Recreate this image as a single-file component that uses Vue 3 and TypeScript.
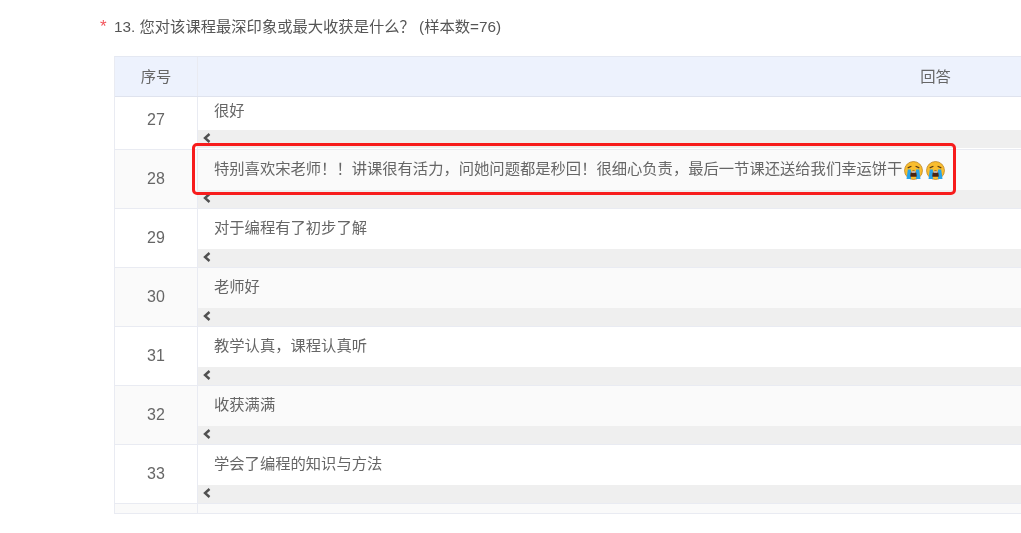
<script setup lang="ts">
interface Row { id: number; text: string; emoji?: boolean }
const rows: Row[] = [
  { id: 27, text: '很好' },
  { id: 28, text: '特别喜欢宋老师！！讲课很有活力，问她问题都是秒回！很细心负责，最后一节课还送给我们幸运饼干', emoji: true },
  { id: 29, text: '对于编程有了初步了解' },
  { id: 30, text: '老师好' },
  { id: 31, text: '教学认真，课程认真听' },
  { id: 32, text: '收获满满' },
  { id: 33, text: '学会了编程的知识与方法' },
]
</script>

<template>
  <div class="page">
    <h3 class="title"><span class="star">*</span><span>13. 您对该课程最深印象或最大收获是什么？ (样本数=76)</span></h3>
    <div class="table">
      <div class="row head">
        <div class="c1">序号</div>
        <div class="c2">回答</div>
      </div>
      <div v-for="r in rows" :key="r.id" class="row body" :class="{ first: r.id === 27 }">
        <div class="c1 num">{{ r.id }}</div>
        <div class="c2b">
          <div class="text">
            <span>{{ r.text }}</span>
            <template v-if="r.emoji">
              <svg v-for="n in 2" :key="n" class="emoji" viewBox="0 0 18 18" aria-hidden="true">
                <circle cx="9" cy="9" r="8.500" fill="#f9bd2e" stroke="#b97f1a" stroke-width="0.700" />
                <path d="M3.500 6.500 7 5M14.500 6.500 11 5" stroke="#5b3a12" stroke-width="1.200" fill="none" />
                <path d="M3.600 8h3v9H2.400z M11.400 8h3l1.200 9h-4.200z" fill="#27a4e8" />
                <path d="M6 13.500c0-3 1.300-4.500 3-4.500s3 1.500 3 4.500v1.500H6z" fill="#4a2512" />
                <path d="M7 9.800h4v1.200H7z" fill="#ffffff" />
              </svg>
            </template>
          </div>
          <div class="hbar"><svg class="arrow" viewBox="0 0 8 10" aria-hidden="true"><path d="M6.500 1 2 5l4.500 4" fill="none" stroke="#505050" stroke-width="2.400" /></svg></div>
        </div>
      </div>
      <div class="row tail">
        <div class="c1"></div>
        <div class="c2"></div>
      </div>
      <div class="mark"></div>
    </div>
  </div>
</template>

<style>
html, body { margin: 0; overflow: hidden; background: #fff; }
</style>

<style scoped>
.page {
  width: 1021px;
  height: 533px;
  overflow: hidden;
  font-family: "Liberation Sans", "Noto Sans CJK SC", sans-serif;
  color: #666;
  font-size: 15.3px;
  filter: blur(0.3px);
}
.title {
  margin: 0;
  padding: 15px 0 0 100px;
  height: 56px;
  box-sizing: border-box;
  display: flex;
  font-weight: 400;
  font-size: 15.3px;
  line-height: 23px;
  color: #555;
  white-space: nowrap;
}
.star { width: 14px; color: #f2545b; font-size: 17px; }
.table {
  position: relative;
  margin-left: 114px;
  width: 1560px;
  border: 1px solid #e9ebf2;
  border-top-color: #e4e8f2;
  box-sizing: border-box;
}
.row { display: flex; }
.c1 {
  width: 83px;
  flex: none;
  display: flex;
  align-items: center;
  justify-content: center;
  border-right: 1px solid #e9ebf2;
  box-sizing: border-box;
}
.head .c1 { padding-bottom: 4px; }
.num { font-size: 16px; }
.first .num { padding-bottom: 6px; }
.head { height: 39px; background: #edf2fd; border-bottom: 1px solid #dfe3ee; box-sizing: content-box; }
.c2 { flex: 1; text-align: center; line-height: 39px; }
.body { height: 58px; border-bottom: 1px solid #e9ebf2; }
.body.first { height: 52px; }
.first .hbar { margin-bottom: 1px; }
.body:nth-of-type(odd) { background: #fafafa; }
.c2b { flex: 1; min-width: 0; display: flex; flex-direction: column; }
.text {
  flex: 1;
  padding-left: 16px;
  padding-top: 8px;
  line-height: 22px;
  display: flex;
  white-space: nowrap;
  box-sizing: border-box;
}
.first .text { padding-top: 3px; }
.hbar {
  height: 18px;
  background: #efefef;
  display: flex;
  align-items: flex-end;
  padding-left: 5px;
}
.arrow { width: 8px; height: 10px; margin-bottom: 5px; }
.emoji { width: 19px; height: 19px; margin: 3px 0 0 2px; flex: none; }
.emoji + .emoji { margin-left: 3px; }
.tail { height: 9px; background: #fafafa; }
.tail .c1 { height: 9px; }
.mark {
  position: absolute;
  left: 77px;
  top: 86px;
  width: 764px;
  height: 52px;
  border: 3px solid #f71c1c;
  border-radius: 5px;
  box-sizing: border-box;
}
</style>
